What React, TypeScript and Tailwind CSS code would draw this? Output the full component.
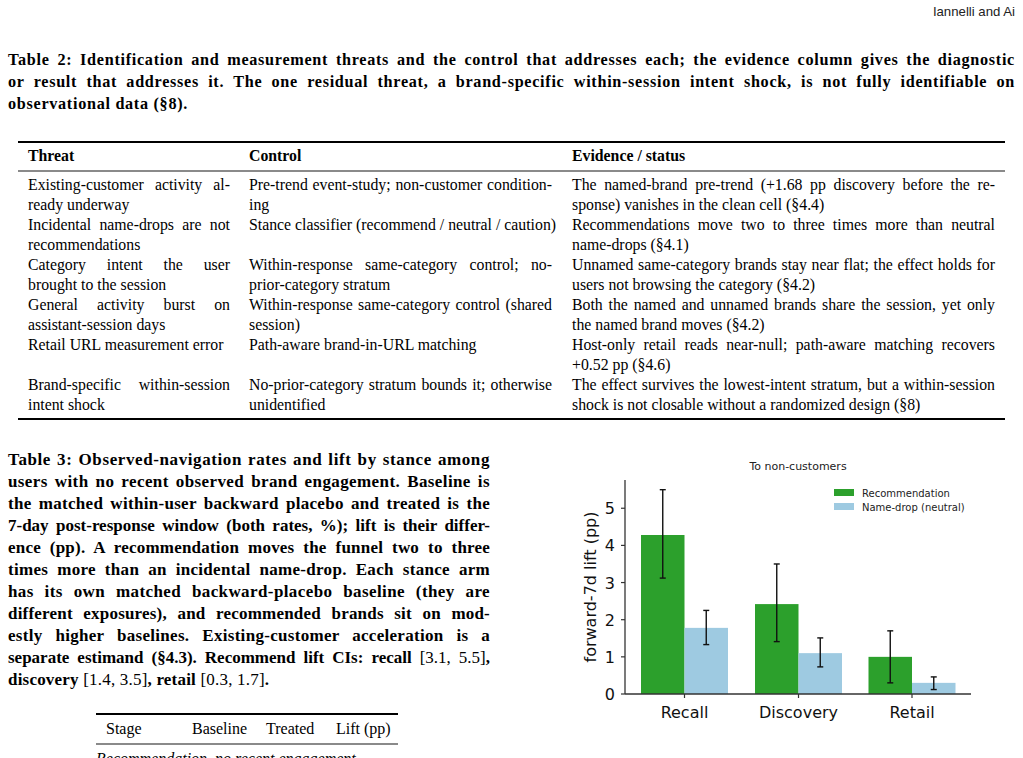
import type { ReactNode } from "react"

const caption2 = [
  "Table 2: Identification and measurement threats and the control that addresses each; the evidence column gives the diagnostic",
  "or result that addresses it. The one residual threat, a brand-specific within-session intent shock, is not fully identifiable on",
  "observational data (§8).",
]

const rows: string[][][] = [
  [
    ["Existing-customer activity al-", "ready underway"],
    ["Pre-trend event-study; non-customer condition-", "ing"],
    ["The named-brand pre-trend (+1.68 pp discovery before the re-", "sponse) vanishes in the clean cell (§4.4)"],
  ],
  [
    ["Incidental name-drops are not", "recommendations"],
    ["Stance classifier (recommend / neutral / caution)"],
    ["Recommendations move two to three times more than neutral", "name-drops (§4.1)"],
  ],
  [
    ["Category intent the user", "brought to the session"],
    ["Within-response same-category control; no-", "prior-category stratum"],
    ["Unnamed same-category brands stay near flat; the effect holds for", "users not browsing the category (§4.2)"],
  ],
  [
    ["General activity burst on", "assistant-session days"],
    ["Within-response same-category control (shared", "session)"],
    ["Both the named and unnamed brands share the session, yet only", "the named brand moves (§4.2)"],
  ],
  [
    ["Retail URL measurement error"],
    ["Path-aware brand-in-URL matching"],
    ["Host-only retail reads near-null; path-aware matching recovers", "+0.52 pp (§4.6)"],
  ],
  [
    ["Brand-specific within-session", "intent shock"],
    ["No-prior-category stratum bounds it; otherwise", "unidentified"],
    ["The effect survives the lowest-intent stratum, but a within-session", "shock is not closable without a randomized design (§8)"],
  ],
]

const caption3: ReactNode[] = [
  <span className="tracking-[0.6px]">Table 3: Observed-navigation rates and lift by stance among</span>,
  <span className="tracking-[0.4px]">users with no recent observed brand engagement. Baseline is</span>,
  <span className="tracking-[0.3px]">the matched within-user backward placebo and treated is the</span>,
  "7-day post-response window (both rates, %); lift is their differ-",
  <span className="tracking-[0.2px]">ence (pp). A recommendation moves the funnel two to three</span>,
  <span className="tracking-[0.3px]">times more than an incidental name-drop. Each stance arm</span>,
  <span className="tracking-[0.4px]">has its own matched backward-placebo baseline (they are</span>,
  <span className="tracking-[0.2px]">different exposures), and recommended brands sit on mod-</span>,
  <span className="tracking-[0.3px]">estly higher baselines. Existing-customer acceleration is a</span>,
  <>
    separate estimand (§4.3). Recommend lift CIs: recall <span className="font-normal">[3.1, 5.5]</span>,
  </>,
  <span className="tracking-[0.2px]">
    discovery <span className="font-normal">[1.4, 3.5]</span>, retail <span className="font-normal">[0.3, 1.7]</span>.
  </span>,
]

// justified lines, last one left-aligned
const Lines = ({ lines }: { lines: ReactNode[] }) => (
  <div>
    {lines.map((line, i) => (
      <div
        key={i}
        className={`whitespace-nowrap ${i < lines.length - 1 ? "text-justify [text-align-last:justify]" : ""}`}
      >
        {line}
      </div>
    ))}
  </div>
)

const groups = [
  { label: "Recall", x: 81, rec: 4.28, recLo: 3.12, recHi: 5.5, nd: 1.78, ndLo: 1.33, ndHi: 2.25 },
  { label: "Discovery", x: 195, rec: 2.42, recLo: 1.41, recHi: 3.5, nd: 1.1, ndLo: 0.73, ndHi: 1.51 },
  { label: "Retail", x: 308.5, rec: 1.0, recLo: 0.3, recHi: 1.7, nd: 0.3, ndLo: 0.12, ndHi: 0.46 },
]

const yOf = (v: number) => 243 - 37.15 * v
const BW = 43.5

const ErrorBar = ({ cx, lo, hi }: { cx: number; lo: number; hi: number }) => (
  <g stroke="#111" strokeWidth={1.4}>
    <line x1={cx} x2={cx} y1={yOf(lo)} y2={yOf(hi)} />
    <line x1={cx - 3} x2={cx + 3} y1={yOf(lo)} y2={yOf(lo)} />
    <line x1={cx - 3} x2={cx + 3} y1={yOf(hi)} y2={yOf(hi)} />
  </g>
)

const Chart = () => (
  <svg width={463} height={280} viewBox="0 0 463 280" fontFamily="'DejaVu Sans', sans-serif">
    <text x={238} y={19} fontSize={11} textAnchor="middle" fill="#222">
      To non-customers
    </text>

    {groups.map((g) => (
      <g key={g.label}>
        <rect x={g.x} y={yOf(g.rec)} width={BW} height={243 - yOf(g.rec)} fill="#2ca02c" />
        <rect x={g.x + BW} y={yOf(g.nd)} width={BW} height={243 - yOf(g.nd)} fill="#9ecae1" />
        <ErrorBar cx={g.x + BW / 2} lo={g.recLo} hi={g.recHi} />
        <ErrorBar cx={g.x + BW * 1.5} lo={g.ndLo} hi={g.ndHi} />
        <line x1={g.x + BW} x2={g.x + BW} y1={243} y2={247} stroke="#333" strokeWidth={1.2} />
        <text x={g.x + BW} y={267} fontSize={16} textAnchor="middle" fill="#111">
          {g.label}
        </text>
      </g>
    ))}

    {/* axes */}
    <line x1={65} x2={65} y1={29} y2={243} stroke="#333" strokeWidth={1.3} />
    <line x1={65} x2={411} y1={243} y2={243} stroke="#333" strokeWidth={1.3} />
    {[0, 1, 2, 3, 4, 5].map((t) => (
      <g key={t}>
        <line x1={61} x2={65} y1={yOf(t)} y2={yOf(t)} stroke="#333" strokeWidth={1.2} />
        <text x={55} y={yOf(t) + 6} fontSize={16} textAnchor="end" fill="#111">
          {t}
        </text>
      </g>
    ))}
    <text
      x={0}
      y={0}
      fontSize={16}
      textAnchor="middle"
      fill="#111"
      transform="translate(36 136) rotate(-90)"
    >
      forward-7d lift (pp)
    </text>

    {/* legend */}
    <rect x={274} y={38} width={20} height={7} fill="#2ca02c" />
    <text x={302} y={45.5} fontSize={10} fill="#222">
      Recommendation
    </text>
    <rect x={274} y={52} width={20} height={7} fill="#9ecae1" />
    <text x={302} y={59.5} fontSize={10} fill="#222">
      Name-drop (neutral)
    </text>
  </svg>
)

const App = () => {
  return (
    <div className="w-[1023px] h-[758px] overflow-hidden bg-white text-black font-['Liberation_Serif',serif]">
      {/* Running head */}
      <div className="flex justify-end pr-[8px] pt-[4px] text-[13.2px] leading-[16px] font-['Liberation_Sans',sans-serif] text-[#222]">
        Iannelli and Ai
      </div>

      {/* Table 2 caption */}
      <div className="mt-[29px] px-[8px] font-bold text-[16.2px] leading-[22px] tracking-[0.7px]">
        <Lines lines={caption2} />
      </div>

      {/* Table 2 */}
      <div className="mt-[26px] mx-[18px] border-t-2 border-b-2 border-black text-[15.8px] leading-[20px]">
        <div className="grid grid-cols-[202px_303px_424px] gap-x-[19px] px-[10px] pt-[3px] pb-[4px] font-bold border-b-2 border-[#8a8a8a]">
          <div>Threat</div>
          <div>Control</div>
          <div className="pl-[1px]">Evidence / status</div>
        </div>
        <div className="grid grid-cols-[202px_303px_424px] gap-x-[19px] px-[10px] pt-[3px] pb-[3px]">
          {rows.map((r, i) => (
            <div key={i} className="contents">
              <Lines lines={r[0]} />
              <Lines lines={r[1]} />
              <div className="pl-[1px]">
                <Lines lines={r[2]} />
              </div>
            </div>
          ))}
        </div>
      </div>

      {/* Table 3 caption + chart */}
      <div className="mt-[29px] flex items-start">
        <div className="ml-[8px] w-[482px] shrink-0">
          <div className="font-bold text-[17px] leading-[22px]">
            <Lines lines={caption3} />
          </div>

          <div className="mt-[22px] ml-[88px] w-[302px] border-t-2 border-black text-[16px] leading-[20px]">
            <div className="flex pl-[10px] pt-[4px] pb-[4px] border-b-2 border-[#8a8a8a]">
              <div className="w-[86px]">Stage</div>
              <div className="w-[74px]">Baseline</div>
              <div className="w-[70px]">Treated</div>
              <div>Lift (pp)</div>
            </div>
            <div className="pt-[4px] italic">Recommendation, no recent engagement</div>
          </div>
        </div>

        <div className="ml-[70px] mt-[2px] shrink-0">
          <Chart />
        </div>
      </div>
    </div>
  )
}

export default App
